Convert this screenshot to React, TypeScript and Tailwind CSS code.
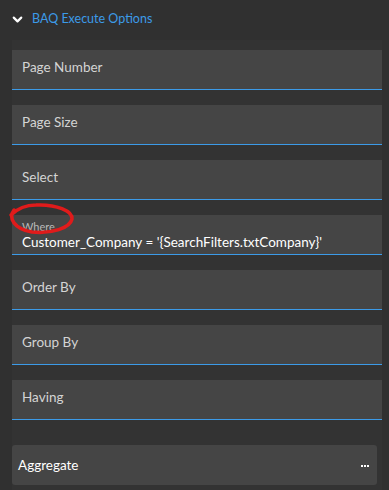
import { ChevronDown } from "lucide-react";

const fields = ["Page Number", "Page Size", "Select"];
const fields2 = ["Order By", "Group By", "Having"];

function Field({ label }: { label: string }) {
  return (
    <div className="h-[40px] bg-[#454545] border-b border-[#3c9be8] px-[10px] pt-[7px]">
      <div className="text-[13.5px] text-[#d4d4d4] leading-[20px]">{label}</div>
    </div>
  );
}

export default function App() {
  return (
    <div className="w-[389px] h-[490px] bg-[#303030] font-['Lato',sans-serif] overflow-hidden relative">
      <div className="h-[40px] flex items-center pl-[10px] pb-[1px]">
        <ChevronDown className="w-[15px] h-[15px] text-white" strokeWidth={3.5} />
        <span className="ml-[7px] text-[12.5px] text-[#3c9be8]">BAQ Execute Options</span>
      </div>
      <div className="mx-[12px] w-[370px] bg-[#333333] pt-[10px] pb-[5px] flex flex-col gap-[15px]">
        {fields.map((f) => (
          <Field key={f} label={f} />
        ))}
        <div className="h-[40px] bg-[#454545] border-b border-[#3c9be8] px-[10px] pt-[5px]">
          <div className="text-[11px] text-[#b8b8b8] leading-[13px]">Where</div>
          <div className="text-[13.5px] text-white leading-[18px]">Customer_Company = '{"{"}SearchFilters.txtCompany{"}"}'</div>
        </div>
        {fields2.map((f) => (
          <Field key={f} label={f} />
        ))}
        <div className="mt-[10px] w-[365px] h-[40px] bg-[#454545] rounded-[3px] flex items-center justify-between pl-[6px] pr-[8px]">
          <span className="text-[13.5px] text-white">Aggregate</span>
          <span className="flex gap-[1px] mt-[1px]">
            <span className="w-[2px] h-[2px] bg-white" />
            <span className="w-[2px] h-[2px] bg-white" />
            <span className="w-[2px] h-[2px] bg-white" />
          </span>
        </div>
      </div>
      <svg className="absolute left-0 top-0 pointer-events-none" width="389" height="490">
        <path
          d="M 14 210 C 8 218, 14 229, 32 232 C 52 234, 70 228, 72 219 C 73 211, 56 204, 36 205 C 25 205, 17 209, 11 215"
          fill="none"
          stroke="#e01b1b"
          strokeWidth="3.5"
          strokeLinecap="round"
        />
      </svg>
    </div>
  );
}
